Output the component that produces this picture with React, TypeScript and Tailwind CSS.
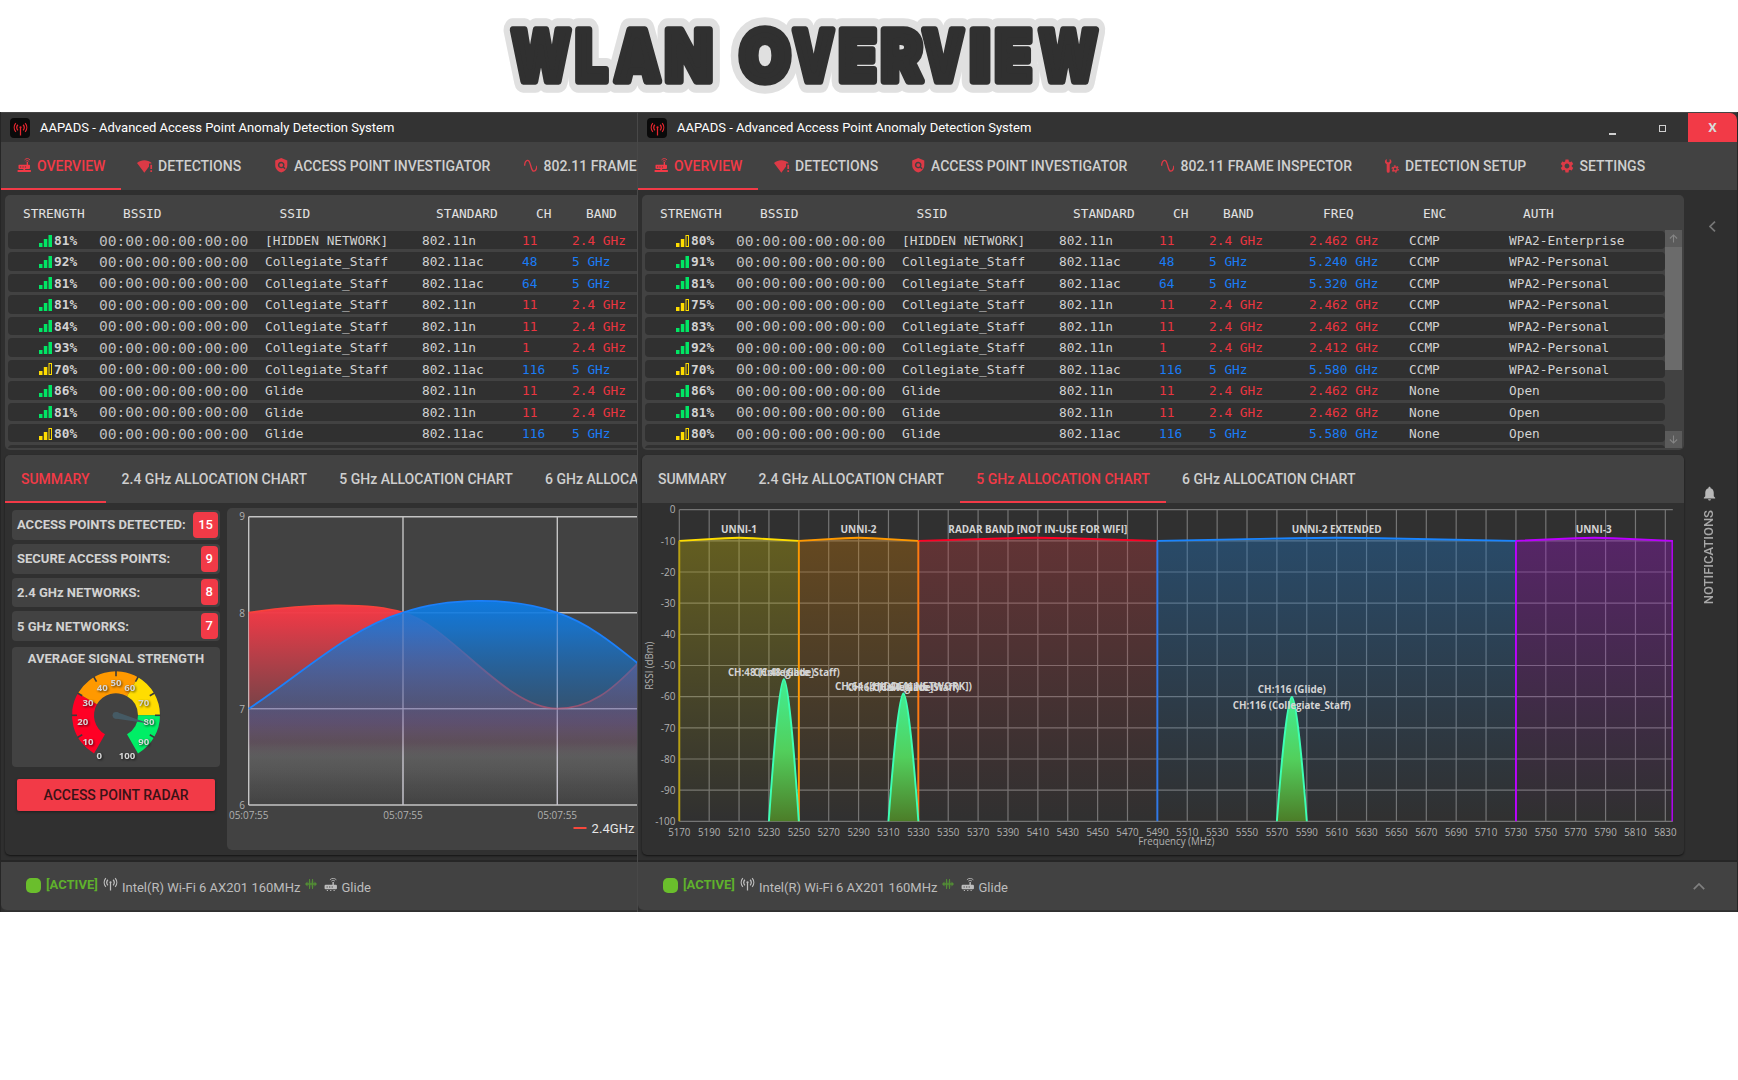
import type { ReactNode } from "react";
import { MdSettings, MdNotifications } from "react-icons/md";

const CHART_FONT = '"Open Sans","Noto Sans",sans-serif';

/* ---------- icons ---------- */

function RouterIcon({ className }: { className: string }) {
  return (
    <svg viewBox="0 0 24 24" className={className} fill="currentColor">
      <path d="M3 11h13V6.500h2.200V11H20a1.500 1.500 0 0 1 1.500 1.500v4A1.500 1.500 0 0 1 20 18H4a1.500 1.500 0 0 1-1.500-1.500v-4A1.500 1.500 0 0 1 3 11zm2 3v1.600h2V14zm4 0v1.600h2V14zm4 0v1.600h2V14z" />
      <path d="M10.500 18h3v2H23v3H1v-3h9.500z" />
      <path d="M12.500 3.200c2.500-3 6.500-3 9 0M14.500 5.600c1.500-1.600 3.500-1.600 5 0" fill="none" stroke="currentColor" strokeWidth="1.500" />
    </svg>
  );
}

function SmallRouterIcon({ className }: { className: string }) {
  return (
    <svg viewBox="0 0 24 24" className={className} fill="currentColor">
      <path d="M3 12h12V7h2.500v5H21a2 2 0 0 1 2 2v4a2 2 0 0 1-2 2H3a2 2 0 0 1-2-2v-4a2 2 0 0 1 2-2zm1.500 3v1.800h2.200V15zm4.500 0v1.800h2.200V15zm4.500 0v1.800h2.200V15z" />
      <path d="M5 21.500h2V24H5zm6 0h2V24h-2zm6 0h2V24h-2z" />
      <path d="M10.500 3.200c3-3.400 8.500-3.400 11.500 0M13 5.600c1.800-1.800 4.800-1.800 6.500 0" fill="none" stroke="currentColor" strokeWidth="1.500" />
    </svg>
  );
}

function WifiAlertIcon({ className }: { className: string }) {
  return (
    <svg viewBox="0 0 24 24" className={className} fill="currentColor">
      <path d="M11 22 0 7.500C6.500 2.200 15.500 2.200 22 7.500L21.400 8.300H18v4.600z" />
      <path d="M20 10h2.600v6.500H20zm0 8.500h2.600V21H20z" />
    </svg>
  );
}

function ShieldSearchIcon({ className }: { className: string }) {
  return (
    <svg viewBox="0 0 24 24" className={className} fill="currentColor">
      <path fillRule="evenodd" d="M12 0 2 4v8c0 5.500 4.200 10.500 10 12 5.800-1.500 10-6.500 10-12V4zm0 6.200a5.400 5.400 0 0 1 4.700 8.100l2.500 2.600-1.700 1.700-2.600-2.600A5.400 5.400 0 1 1 12 6.200zm0 2.300a3.100 3.100 0 1 0 0 6.200 3.100 3.100 0 0 0 0-6.200z" />
    </svg>
  );
}

function SineIcon({ className }: { className: string }) {
  return (
    <svg viewBox="2 2 20 20" className={className} fill="currentColor">
      <path d="M16.500,21C13.500,21 12.310,16.760 11.050,12.280C10.140,9.040 9,5 7.500,5C4.110,5 4,11.930 4,12H2C2,11.630 2.060,3 7.500,3C10.500,3 11.710,7.250 12.970,11.740C13.830,14.800 15,19 16.500,19C19.940,19 20.030,12.070 20.030,12H22.030C22.030,12.370 21.970,21 16.500,21Z" />
    </svg>
  );
}

function WrenchCogIcon({ className }: { className: string }) {
  return (
    <svg viewBox="0 0 24 24" className={className}>
      <path fill="currentColor" d="M3 0v4.500l2.500 1.500L8 4.500V0c2.200 1 3.300 3 3 5.300-.2 1.600-1.300 2.900-2.900 3.500V21a2.600 2.600 0 0 1-5.200 0V8.800C1.300 8.200.2 6.900 0 5.300-.3 3 .8 1 3 0z" />
      <circle cx="17.500" cy="17" r="3.400" fill="none" stroke="currentColor" strokeWidth="2.400" />
      <circle cx="17.500" cy="17" r="5.300" fill="none" stroke="currentColor" strokeWidth="2.200" strokeDasharray="2.775 2.775" />
    </svg>
  );
}

function AntennaIcon({ className }: { className: string }) {
  return (
    <svg viewBox="0 0 24 24" className={className} fill="none" stroke="currentColor" strokeWidth="2">
      <path d="M4.500 3.500a11 11 0 0 0 0 14M19.500 3.500a11 11 0 0 1 0 14M7.800 6a7 7 0 0 0 0 9M16.200 6a7 7 0 0 1 0 9M12 11v12" />
      <circle cx="12" cy="10" r="1.800" fill="currentColor" stroke="none" />
    </svg>
  );
}

function SparkIcon({ className }: { className: string }) {
  return (
    <svg viewBox="0 0 24 24" className={className} fill="currentColor">
      <path d="M0 12l5-5v3.500h2.500L8.200 2h1.800L11 10.500h2L14.200 2H16l.8 8.500H19V7l5 5-5 5v-3.500h-2.200L16 22h-1.800L13 13.500h-2L10 22H8.200l-.7-8.500H5V17z" />
    </svg>
  );
}

function SignalBars({ strong }: { strong: boolean }) {
  const c = strong ? "#00e664" : "#ffdd00";
  return (
    <svg viewBox="0 0 13 12" className="h-3 w-[13px]">
      <rect x="0" y="8" width="3.500" height="4" fill={c} />
      <rect x="4.800" y="4" width="3.500" height="8" fill={c} />
      {strong ? (
        <rect x="9.500" y="0" width="3.500" height="12" fill={c} />
      ) : (
        <rect x="10" y=".5" width="2.500" height="11" fill="none" stroke={c} />
      )}
    </svg>
  );
}

/* ---------- heading ---------- */

const LETTERS: [string, number, number][] = [
  ["W", 508, 574], ["L", 575, 608], ["A", 611, 664], ["N", 664.5, 713],
  ["O", 739, 791], ["V", 789.5, 837.5], ["E", 838.5, 877], ["R", 880.5, 923],
  ["V", 919, 967.5], ["I", 969.5, 990.5], ["E", 994.5, 1032.5], ["W", 1035.5, 1101],
];

function Heading() {
  const layer = (color: string, width: number) =>
    LETTERS.map(([ch, a, b], i) => {
      const pad = ch === "W" || ch === "V" || ch === "A" ? 3.5 : 0.5;
      return (
        <text key={i} x={a + pad} y={81.2} textLength={b - a - pad * 2} lengthAdjust="spacingAndGlyphs" fill={color} stroke={color} strokeWidth={width} strokeLinejoin="round">
          {ch}
        </text>
      );
    });
  return (
    <svg viewBox="0 0 1738 112" className="block h-[112px] w-[1738px]" fontFamily="Inter, sans-serif" fontWeight="900" fontSize="70.500">
      <g>{layer("#e0e0e0", 23.5)}</g>
      <g>{layer("#303030", 7.5)}</g>
    </svg>
  );
}

/* ---------- access point table ---------- */

const NETWORKS = [
  { ssid: "[HIDDEN NETWORK]", std: "802.11n", ch: 11, freq: "2.462 GHz", enc: "CCMP", auth: "WPA2-Enterprise" },
  { ssid: "Collegiate_Staff", std: "802.11ac", ch: 48, freq: "5.240 GHz", enc: "CCMP", auth: "WPA2-Personal" },
  { ssid: "Collegiate_Staff", std: "802.11ac", ch: 64, freq: "5.320 GHz", enc: "CCMP", auth: "WPA2-Personal" },
  { ssid: "Collegiate_Staff", std: "802.11n", ch: 11, freq: "2.462 GHz", enc: "CCMP", auth: "WPA2-Personal" },
  { ssid: "Collegiate_Staff", std: "802.11n", ch: 11, freq: "2.462 GHz", enc: "CCMP", auth: "WPA2-Personal" },
  { ssid: "Collegiate_Staff", std: "802.11n", ch: 1, freq: "2.412 GHz", enc: "CCMP", auth: "WPA2-Personal" },
  { ssid: "Collegiate_Staff", std: "802.11ac", ch: 116, freq: "5.580 GHz", enc: "CCMP", auth: "WPA2-Personal" },
  { ssid: "Glide", std: "802.11n", ch: 11, freq: "2.462 GHz", enc: "None", auth: "Open" },
  { ssid: "Glide", std: "802.11n", ch: 11, freq: "2.462 GHz", enc: "None", auth: "Open" },
  { ssid: "Glide", std: "802.11ac", ch: 116, freq: "5.580 GHz", enc: "None", auth: "Open" },
];

function NetworkTable({ strengths }: { strengths: number[] }) {
  return (
    <div className="h-[255px] shrink-0 overflow-hidden rounded-[5px] bg-[#424242] font-['DejaVu_Sans_Mono',monospace] text-[12.8px] text-[#d2d2d2]">
      <div className="grid h-[35px] grid-cols-[100px_156.5px_156.5px_100px_50px_100px_100px_100px_1fr] items-center pt-[3px] pl-[18px] text-[#e2e2e2]">
        {["STRENGTH", "BSSID", "SSID", "STANDARD", "CH", "BAND", "FREQ", "ENC", "AUTH"].map((h) => (
          <span key={h}>{h}</span>
        ))}
      </div>
      <div className="flex h-[218px]">
        <div className="ml-[3px] flex w-[1019.5px] flex-col gap-[3px] overflow-hidden pt-px">
          {NETWORKS.map((n, i) => {
            const five = n.freq.startsWith("5");
            const tone = five ? "text-[#1a7cf5]" : "text-[#ea3540]";
            return (
              <div key={i} className="grid h-[18.45px] shrink-0 grid-cols-[91px_166px_157px_100px_50px_100px_100px_100px_1fr] items-center rounded-[4px] bg-[#303030] whitespace-pre">
                <span className="flex items-center pl-[31px]">
                  <SignalBars strong={strengths[i] > 80} />
                  <b className="ml-[2px]">{strengths[i]}%</b>
                </span>
                <span className="text-[14.6px] leading-[18px] text-[#bdbdbd]">00:00:00:00:00:00</span>
                <span>{n.ssid}</span>
                <span>{n.std}</span>
                <span className={tone}>{n.ch}</span>
                <span className={tone}>{five ? "5 GHz" : "2.4 GHz"}</span>
                <span className={tone}>{n.freq}</span>
                <span>{n.enc}</span>
                <span>{n.auth}</span>
              </div>
            );
          })}
          <div className="h-[18px] shrink-0 rounded-[4px] bg-[#303030]" />
        </div>
        <div className="flex w-[17px] flex-col bg-[#424242]">
          <div className="flex h-[17px] items-center justify-center bg-[#5b5b5b]">
            <svg viewBox="0 0 10 10" className="size-[9px]" fill="none" stroke="#858585" strokeWidth="1.200"><path d="M5 9.500V1M1 5l4-4 4 4" /></svg>
          </div>
          <div className="h-[123px] bg-[#6b6b6b]" />
          <div className="mt-auto flex h-[17px] items-center justify-center bg-[#5b5b5b]">
            <svg viewBox="0 0 10 10" className="size-[9px]" fill="none" stroke="#858585" strokeWidth="1.200"><path d="M5 .5V9M1 5l4 4 4-4" /></svg>
          </div>
        </div>
      </div>
    </div>
  );
}

/* ---------- summary tab ---------- */

function polar(cx: number, cy: number, r: number, pct: number) {
  const a = ((pct * 3 - 150) * Math.PI) / 180;
  return [cx + r * Math.sin(a), cy - r * Math.cos(a)];
}

function Gauge() {
  const cx = 116;
  const cy = 715.3;
  const arc = (from: number, to: number) => {
    const [x1, y1] = polar(cx, cy, 44, from);
    const [x2, y2] = polar(cx, cy, 44, to);
    const [x3, y3] = polar(cx, cy, 22, to);
    const [x4, y4] = polar(cx, cy, 22, from);
    return `M${x1} ${y1}A44 44 0 0 1 ${x2} ${y2}L${x3} ${y3}A22 22 0 0 0 ${x4} ${y4}Z`;
  };
  const labels: [number, number, number][] = [
    [0, 99.3, 755.3], [10, 88, 741.3], [20, 82.7, 721.7], [30, 88, 702.7], [40, 102.3, 688], [50, 116, 683],
    [60, 129.7, 688], [70, 143.7, 702.7], [80, 149, 721.7], [90, 143.7, 741.3], [100, 127, 755.3],
  ];
  return (
    <svg viewBox="12 669 208 98" className="block h-[98px] w-[208px]">
      <path d={arc(0, 30)} fill="#ff0025" />
      <path d={arc(30, 60)} fill="#ff9900" />
      <path d={arc(60, 80)} fill="#ffdd00" />
      <path d={arc(80, 100)} fill="#00ee66" />
      {[10, 20, 30, 40, 50, 60, 70, 80, 90].map((p) => {
        const [x1, y1] = polar(cx, cy, 44.5, p);
        const [x2, y2] = polar(cx, cy, 39, p);
        return <line key={p} x1={x1} y1={y1} x2={x2} y2={y2} stroke="#3a3a3a" strokeWidth="1.600" />;
      })}
      <g fontFamily={CHART_FONT} fontWeight="700" fontSize="9.600" fill="#d6d6d6" textAnchor="middle" className="[filter:drop-shadow(1px_1px_1px_#000a)]">
        {labels.map(([n, x, y]) => (
          <text key={n} x={x} y={y + 3.4}>{n}</text>
        ))}
      </g>
      <path d="M116.500 712 149 723.600 115 718.600z" fill="#455a64" />
      <circle cx="116" cy="715.300" r="3.400" fill="#455a64" />
    </svg>
  );
}

function TrendChart() {
  const red = "M248.700 612.700C305 604 370 602 403 612.700C450 625 505 708.700 557.300 708.700C590 708.700 612 690 637 664L700 620";
  const blue = "M248.700 708.700C300 675 350 628 403 612.700C445 598 510 596 557.300 612.700C590 624 615 645 637 662.700L700 715";
  return (
    <svg viewBox="227 508 820 342" className="block h-[342px] w-[820px]" fontFamily={CHART_FONT}>
      <defs>
        <linearGradient id="redFill" gradientUnits="userSpaceOnUse" x1="0" y1="605" x2="0" y2="805">
          <stop offset="0" stopColor="#f53a45" />
          <stop offset=".1" stopColor="#ea3a47" stopOpacity=".93" />
          <stop offset=".48" stopColor="#d8434f" stopOpacity=".42" />
          <stop offset=".68" stopColor="#a05a6a" stopOpacity=".22" />
          <stop offset=".76" stopColor="#bbb" stopOpacity=".14" />
          <stop offset=".9" stopColor="#ccc" stopOpacity=".03" />
          <stop offset="1" stopColor="#fff" stopOpacity="0" />
        </linearGradient>
        <linearGradient id="blueFill" gradientUnits="userSpaceOnUse" x1="0" y1="600" x2="0" y2="805">
          <stop offset="0" stopColor="#0c7ce6" stopOpacity=".96" />
          <stop offset=".15" stopColor="#1478d8" stopOpacity=".84" />
          <stop offset=".5" stopColor="#2268ac" stopOpacity=".5" />
          <stop offset=".6" stopColor="#4a62b4" stopOpacity=".34" />
          <stop offset=".7" stopColor="#7a6a90" stopOpacity=".2" />
          <stop offset=".78" stopColor="#aaa" stopOpacity=".1" />
          <stop offset="1" stopColor="#fff" stopOpacity="0" />
        </linearGradient>
      </defs>
      <path d="M248.700 516.700H1040M248.700 612.700H1040M248.700 708.700H1040M248.700 805H1040M248.700 516.700V805M403 516.700V805M557.300 516.700V805" fill="none" stroke="#c4c4c4" strokeWidth="1.400" />
      <path d={red + "V805H248.700Z"} fill="url(#redFill)" />
      <path d={red} fill="none" stroke="#f8423c" strokeWidth="1.800" />
      <path d={blue + "V805H248.700Z"} fill="url(#blueFill)" />
      <path d="M248.700 708.700H1040M403 612.700V805M557.300 612.700V805" stroke="#b9b4d4" strokeOpacity=".4" fill="none" />
      <path d={blue} fill="none" stroke="#1c80fa" strokeWidth="1.800" />
      <g fontSize="10" fill="#b0b0b0">
        <g textAnchor="end">
          <text x="245" y="520.300">9</text>
          <text x="245" y="617">8</text>
          <text x="245" y="712.700">7</text>
          <text x="245" y="809">6</text>
        </g>
        <g textAnchor="middle">
          {[248.7, 403, 557.3].map((x) => (
            <text key={x} x={x} y="819.300" textLength="39.500">05:07:55</text>
          ))}
        </g>
      </g>
      <path d="M573.500 828H586.500" stroke="#f8483c" strokeWidth="2" />
      <text x="591.500" y="833" fontFamily="Roboto, sans-serif" fontSize="13" textLength="43" fill="#e6e6e6">2.4GHz</text>
    </svg>
  );
}

function Summary() {
  const stats: [string, number][] = [
    ["ACCESS POINTS DETECTED:", 15], ["SECURE ACCESS POINTS:", 9], ["2.4 GHz NETWORKS:", 8], ["5 GHz NETWORKS:", 7],
  ];
  return (
    <div className="flex pt-[5px]">
      <div className="ml-[7px] flex w-[208px] shrink-0 flex-col pt-[2px]">
        <div className="flex flex-col gap-[4px]">
          {stats.map(([label, n]) => (
            <div key={label} className="flex h-[29.8px] items-center justify-between rounded-[4px] bg-[#424242] pr-[2px] pl-[5px]">
              <span className="text-[13px] font-bold whitespace-nowrap text-[#d2d2d2]">{label}</span>
              <span className="rounded-[4px] bg-[#f23a47] px-[5px] text-[13px] leading-[26px] font-medium text-white">{n}</span>
            </div>
          ))}
        </div>
        <div className="mt-[6px] h-[120px] rounded-[4px] bg-[#424242]">
          <div className="h-[22px] text-center text-[13px] leading-[23px] font-bold text-[#d2d2d2]">AVERAGE SIGNAL STRENGTH</div>
          <Gauge />
        </div>
        <button className="mt-[12px] ml-[5px] h-8 w-[198px] rounded-[2px] bg-[#f23a47] pt-px text-[14px] font-medium text-[#3a1216] shadow-[0_1px_3px_#0006]">ACCESS POINT RADAR</button>
      </div>
      <div className="ml-[7px] h-[342px] w-[820px] shrink-0 overflow-hidden rounded-[5px] bg-[#424242]">
        <TrendChart />
      </div>
    </div>
  );
}

/* ---------- 5 GHz allocation tab ---------- */

const fx = (mhz: number) => 679.3 + 1.494 * (mhz - 5170);
const dy = (dbm: number) => 509.7 - 3.116 * dbm;

const BANDS = [
  { id: "u1", name: "UNNI-1", from: 5170, to: 5250, w: 36, line: "#ffdd00", edge: "#b8a010", fill: "#cdbb00", o: 0.33, cx: 5210 },
  { id: "u2", name: "UNNI-2", from: 5250, to: 5330, w: 36, line: "#ff9900", edge: "#ff9900", fill: "#d07a00", o: 0.33, cx: 5290 },
  { id: "rb", name: "RADAR BAND [NOT IN-USE FOR WIFI]", from: 5330, to: 5490, w: 179, line: "#ff0025", edge: "#ff7a10", fill: "#c23a3e", o: 0.34, cx: 5410 },
  { id: "ux", name: "UNNI-2 EXTENDED", from: 5490, to: 5730, w: 90, line: "#1a85ff", edge: "#2d78ea", fill: "#1d76c6", o: 0.38, cx: 5610 },
  { id: "u3", name: "UNNI-3", from: 5730, to: 5835, w: 36, line: "#bb00ff", edge: "#bb00ff", fill: "#9a12c8", o: 0.36, cx: 5782 },
];

const PEAKS = [
  { c: 5240, top: 679.3 },
  { c: 5320, top: 693.5 },
  { c: 5580, top: 697 },
];

const PEAK_LABELS: [string, number, number, number][] = [
  ["CH:48 (Collegiate_Staff)", 5240, 675.6, 112],
  ["CH:48 (Glide)", 5240, 675.6, 61],
  ["CH:64 ([HIDDEN NETWORK])", 5320, 689.6, 137],
  ["CH:64 (Collegiate_Staff)", 5320, 691.3, 112],
  ["CH:64 (Glide)", 5320, 691.3, 61],
  ["CH:116 (Glide)", 5580, 692.6, 68],
  ["CH:116 (Collegiate_Staff)", 5580, 708.6, 118],
];

function AllocationChart() {
  const bottom = dy(-100);
  const freqs = Array.from({ length: 34 }, (_, i) => 5170 + i * 20);
  const levels = Array.from({ length: 11 }, (_, i) => -i * 10);
  return (
    <svg viewBox="642 503 1043 352" className="block h-[352px] w-[1043px]" fontFamily={CHART_FONT}>
      <defs>
        {BANDS.map((b) => (
          <linearGradient key={b.id} id={b.id} x1="0" y1="0" x2="0" y2="1">
            <stop offset="0" stopColor={b.fill} stopOpacity={b.o} />
            <stop offset="1" stopColor={b.fill} stopOpacity="0" />
          </linearGradient>
        ))}
        <linearGradient id="peak" x1="0" y1="0" x2="0" y2="1">
          <stop offset="0" stopColor="#41ee92" />
          <stop offset=".5" stopColor="#52cf5c" />
          <stop offset="1" stopColor="#4c7d28" />
        </linearGradient>
      </defs>
      <g stroke="#757575" strokeWidth="1.200">
        {freqs.map((f) => (
          <line key={f} x1={fx(f)} x2={fx(f)} y1={dy(0)} y2={bottom} />
        ))}
        {levels.map((l) => (
          <line key={l} x1={fx(5170)} x2={fx(5835)} y1={dy(l)} y2={dy(l)} />
        ))}
      </g>
      {BANDS.map((b) => {
        const mid = (fx(b.from) + fx(b.to)) / 2;
        const r = (fx(b.to) - fx(b.from)) * 0.12;
        const top = `M${fx(b.from)} ${dy(-10)}L${mid - r} ${dy(-9.15)}Q${mid} ${dy(-8.9)} ${mid + r} ${dy(-9.15)}L${fx(b.to)} ${dy(-10)}`;
        return (
          <g key={b.id} fill="none">
            <path d={`${top}V${bottom}H${fx(b.from)}Z`} fill={`url(#${b.id})`} />
            <path d={top} stroke={b.line} strokeWidth="1.900" />
            <path d={`M${fx(b.from)} ${dy(-10)}V${bottom}`} stroke={b.edge} strokeWidth="1.900" />
          </g>
        );
      })}
      <path d={`M${fx(5834.6)} ${dy(-10)}V${bottom}`} stroke="#bb00ff" strokeWidth="1.400" />
      {PEAKS.map(({ c, top }) => {
        const x = fx(c);
        const h = 14.95;
        const H = bottom - top;
        const d = `M${x - h} ${bottom}C${x - h * 0.75} ${bottom - H * 0.4} ${x - h * 0.3} ${top} ${x} ${top}C${x + h * 0.3} ${top} ${x + h * 0.75} ${bottom - H * 0.4} ${x + h} ${bottom}`;
        return <path key={c} d={d} fill="url(#peak)" stroke="#3dffb4" strokeWidth="1.900" />;
      })}
      <g fontSize="9.800" fontWeight="700" fill="#d4d4d4" textAnchor="middle">
        {BANDS.map((b) => (
          <text key={b.id} x={fx(b.cx)} y="533.400" textLength={b.w} lengthAdjust="spacingAndGlyphs">{b.name}</text>
        ))}
        {PEAK_LABELS.map(([t, f, y, w]) => (
          <text key={t} x={fx(f)} y={y} textLength={w} lengthAdjust="spacingAndGlyphs">{t}</text>
        ))}
      </g>
      <g fontSize="10" fill="#b0b0b0">
        <g textAnchor="middle">
          {freqs.map((f) => (
            <text key={f} x={fx(f)} y="836" textLength="22.300" lengthAdjust="spacingAndGlyphs">{f}</text>
          ))}
          <text x="1176.300" y="844.800" textLength="76" lengthAdjust="spacingAndGlyphs">Frequency (MHz)</text>
          <text transform="translate(652.600 665.700) rotate(-90)" textLength="48" lengthAdjust="spacingAndGlyphs">RSSI (dBm)</text>
        </g>
        <g textAnchor="end">
          {levels.map((l) => (
            <text key={l} x="675.500" y={dy(l) + 3.7}>{l === 0 ? "0" : l}</text>
          ))}
        </g>
      </g>
    </svg>
  );
}

/* ---------- window ---------- */

const NAV: { label: string; icon: ReactNode; box: string }[] = [
  { label: "OVERVIEW", box: "w-[120px] gap-[5.5px]", icon: <RouterIcon className="size-[14.5px] shrink-0" /> },
  { label: "DETECTIONS", box: "w-[137px] gap-[5px]", icon: <WifiAlertIcon className="size-[16px] shrink-0" /> },
  { label: "ACCESS POINT INVESTIGATOR", box: "w-[249.5px] gap-[5.5px]", icon: <ShieldSearchIcon className="size-[14.5px] shrink-0" /> },
  { label: "802.11 FRAME INSPECTOR", box: "w-[224.5px] gap-[6.5px]", icon: <SineIcon className="size-[13.5px] shrink-0" /> },
  { label: "DETECTION SETUP", box: "w-[174.5px] gap-[6px]", icon: <WrenchCogIcon className="size-[14px] shrink-0" /> },
  { label: "SETTINGS", box: "w-[118px] gap-[5px]", icon: <MdSettings className="-ml-px size-[16px] shrink-0" /> },
];

const TABS = [
  { label: "SUMMARY", box: "w-[100.5px]" },
  { label: "2.4 GHz ALLOCATION CHART", box: "w-[217.5px]" },
  { label: "5 GHz ALLOCATION CHART", box: "w-[206px]" },
  { label: "6 GHz ALLOCATION CHART", box: "w-[205.5px]" },
];

function AppWindow({ strengths, tab, children }: { strengths: number[]; tab: number; children: ReactNode }) {
  return (
    <div className="flex h-[800px] w-[1099px] shrink-0 flex-col overflow-hidden bg-[#2f2f2f] font-['Roboto',sans-serif]">
      <div className="flex h-[30px] shrink-0 items-center border-t border-[#454545] bg-[#333333] pl-[9px]">
        <div className="mt-px flex size-5 items-center justify-center rounded-[4px] bg-[#0a0a0a] text-[#e5262e]">
          <AntennaIcon className="size-[15px]" />
        </div>
        <span className="mt-px ml-[10px] text-[13px] whitespace-nowrap text-white">AAPADS - Advanced Access Point Anomaly Detection System</span>
        <div className="ml-auto flex h-full items-center">
          <div className="mt-[13px] mr-[43px] h-[2px] w-[7px] bg-[#cfcfcf]" />
          <div className="mt-[2px] mr-[22px] size-[7px] border border-[#cfcfcf]" />
          <div className="flex h-full w-[49px] items-center justify-center rounded-tr-[7px] bg-[#f23a47] text-[13.5px] font-bold text-[#d8d8d8]">X</div>
        </div>
      </div>
      <nav className="flex h-12 shrink-0 bg-[#424242] text-[14px] font-medium text-[#cfcfcf]">
        {NAV.map((n, i) => (
          <div key={n.label} className={`flex shrink-0 items-center border-b-2 pt-[2px] pl-4 whitespace-nowrap ${n.box} ${i === 0 ? "border-[#f23a47] text-[#f23a47]" : "border-transparent"}`}>
            <span className={i === 0 ? "-mt-px text-[#f23a47]" : "-mt-px text-[#dc3a46]"}>{n.icon}</span>
            <span>{n.label}</span>
          </div>
        ))}
      </nav>
      <div className="flex h-[670px] shrink-0">
        <div className="flex w-[1046px] shrink-0 flex-col gap-[5px] pt-[5px] pl-1">
          <NetworkTable strengths={strengths} />
          <div className="h-[400px] overflow-hidden rounded-[5px] bg-[#303030] shadow-[0_1px_2px_#0009]">
            <div className="flex h-12 bg-[#424242] text-[14px] font-medium text-[#cfcfcf]">
              {TABS.map((t, i) => (
                <div key={t.label} className={`flex shrink-0 items-center justify-center border-b-2 pt-[2px] whitespace-nowrap ${t.box} ${i === tab ? "border-[#f23a47] text-[#f23a47]" : "border-transparent"}`}>
                  {t.label}
                </div>
              ))}
            </div>
            {children}
          </div>
        </div>
        <div className="flex flex-1 flex-col items-center pr-[3px] text-[#a8a8a8]">
          <svg viewBox="0 0 7 11" className="mt-[31px] ml-[7px] h-[11px] w-[7px]" fill="none" stroke="#777" strokeWidth="1.700"><path d="M6 .6 1 5.500l5 4.900" /></svg>
          <MdNotifications className="mt-[253px] size-[17px] text-[#b8b8b8]" />
          <div className="mt-[8px] rotate-180 text-[13px] leading-[16px] font-medium [writing-mode:vertical-rl]">NOTIFICATIONS</div>
        </div>
      </div>
      <footer className="flex h-[51px] shrink-0 items-center rounded-bl-[6px] border-t-2 border-b border-t-[#262626] border-b-[#333] bg-[#424242] pl-[25px] text-[13px] text-[#bdbdbd]">
        <div className="-mt-px size-[15px] rounded-[5px] bg-[#6abe2c]" />
        <span className="-mt-[3px] ml-[5px] w-[52px] font-bold text-[#5fb02c]">[ACTIVE]</span>
        <AntennaIcon className="-mt-[5px] ml-[5px] size-[15px]" />
        <span className="mt-[3px] ml-[4px] w-[183px] whitespace-nowrap">Intel(R) Wi-Fi 6 AX201 160MHz</span>
        <SparkIcon className="-mt-[4px] size-3 text-[#528c35]" />
        <SmallRouterIcon className="-mt-[3px] ml-[7px] size-[13.5px]" />
        <span className="mt-[3px] ml-[4px]">Glide</span>
        <svg viewBox="0 0 12 7" className="mr-[32px] ml-auto h-[7px] w-[12px]" fill="none" stroke="#808080" strokeWidth="1.700"><path d="M.8 6.200 6 1l5.200 5.200" /></svg>
      </footer>
    </div>
  );
}

export default function App() {
  return (
    <div className="h-[1080px] w-[1738px] overflow-hidden bg-white">
      <Heading />
      <main className="flex h-[800px] w-[1738px] bg-[#262626]">
        <div className="ml-px flex w-[637px] shrink-0 overflow-hidden border-r border-[#484848]">
          <AppWindow strengths={[81, 92, 81, 81, 84, 93, 70, 86, 81, 80]} tab={0}>
            <Summary />
          </AppWindow>
        </div>
        <AppWindow strengths={[80, 91, 81, 75, 83, 92, 70, 86, 81, 80]} tab={2}>
          <AllocationChart />
        </AppWindow>
      </main>
    </div>
  );
}
